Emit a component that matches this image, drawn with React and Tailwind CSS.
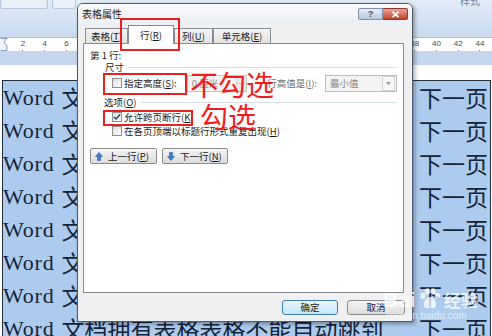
import React from "react";

const rows = Array.from({ length: 8 });
const rulerNums = Array.from({ length: 22 }, (_, i) => (i + 1) * 2);

// small checkbox like the classic Windows one
const Box = ({ checked }) => (
  <span className="w-[10px] h-[10px] shrink-0 border border-[#8e8f8f] bg-gradient-to-br from-[#dedede] to-white flex items-center justify-center">
    {checked && (
      <svg width="8" height="8" viewBox="0 0 8 8">
        <path d="M1 4 L3 6 L7 1.5" fill="none" stroke="#2b3f5c" strokeWidth="1.4" />
      </svg>
    )}
  </span>
);

const Arrow = ({ up }) => (
  <svg width="8" height="9" viewBox="0 0 8 9" className="shrink-0">
    <path
      d={up ? "M4 0.5 L7.5 4.5 L5.5 4.5 L5.5 8.5 L2.5 8.5 L2.5 4.5 L0.5 4.5 Z" : "M4 8.5 L7.5 4.5 L5.5 4.5 L5.5 0.5 L2.5 0.5 L2.5 4.5 L0.5 4.5 Z"}
      fill="#3f7fd0"
      stroke="#2a5a9e"
      strokeWidth="0.6"
    />
  </svg>
);

const Tab = ({ children, w, active }) => (
  <div
    className={
      active
        ? `${w} h-[19px] -mb-px z-10 bg-white border border-b-0 border-[#898c95] flex items-center justify-center`
        : `${w} h-[15px] bg-gradient-to-b from-[#f4f4f4] to-[#e2e2e2] border border-b-0 border-[#898c95] flex items-center justify-center`
    }
  >
    {children}
  </div>
);

export default function App() {
  return (
    <div className="relative w-[492px] h-[336px] overflow-hidden bg-white font-['Noto_Sans_CJK_SC',sans-serif]">
      {/* ribbon */}
      <div className="h-[38px] bg-gradient-to-b from-[#e2ecf8] to-[#c9daef] border-b border-[#a7bdd8] flex items-start">
        <div className="w-[48px] h-[9px] bg-[#e9f0f8] border border-t-0 border-[#b4c7de] rounded-b-[3px]" />
        <div className="w-[24px] h-[9px] ml-[4px] bg-[#e9f0f8] border border-t-0 border-[#b4c7de] rounded-b-[3px]" />
        <div className="ml-auto mr-[12px] -mt-[7px] text-[10px] text-[#6a84a6]">样式</div>
      </div>

      {/* ruler */}
      <div className="h-[13px] bg-white flex relative">
        <svg width="8" height="13" viewBox="0 0 8 13" className="absolute left-0 top-0">
          <path d="M0.5 0.5 H7 L4 4 L7 8 V12.5 H0.5" fill="#eef3f9" stroke="#8a9bb2" />
        </svg>
        <div className="flex pl-[12px]">
          {rulerNums.map((n) => (
            <div key={n} className="w-[21.78px] flex flex-col items-center">
              <span className="text-[8px] leading-[12px] text-[#4d4d4d] font-['Liberation_Sans']">{n}</span>
              <span className="w-px h-[2px] bg-[#777]" />
            </div>
          ))}
        </div>
      </div>
      <div className="h-[14px] bg-[#c3d6ee]" />
      <div className="h-[15px] bg-white" />

      {/* table in the document */}
      <div className="ml-[2px] w-[489px] border-l border-t border-r border-[#26303c] bg-[#adcbee] text-[#14233a]">
        {rows.map((_, i) => (
          <div key={i} className="h-[33px] flex items-center justify-between pr-[2px] leading-none">
            <span className="flex items-center">
              <span className="font-['Liberation_Serif'] text-[22px] tracking-[0.8px]">Word</span>
              <span className="text-[23px] ml-[7px]">文档拥有表格表格不能自动跳到</span>
            </span>
            <span className="text-[23px]">下一页</span>
          </div>
        ))}
      </div>

      {/* dialog window */}
      <div className="absolute left-[77px] top-[3px] w-[336px] h-[319px] border border-[#4d5b6b] rounded-t-[6px] bg-[#f0f0f0] flex flex-col shadow-[2px_2px_4px_rgba(0,0,0,0.35)] text-[9.5px] text-[#1a1a1a]">
        <div className="h-[21px] shrink-0 rounded-t-[5px] bg-gradient-to-b from-[#f8f9fb] to-[#eceff3] flex items-start">
          <span className="ml-[4px] mt-[3px] text-[10px] leading-[14px]">表格属性</span>
          <div className="ml-auto mr-[4px] mt-[4px] flex">
            <div className="w-[25px] h-[12px] border border-[#7d8fa8] rounded-l-[2px] bg-gradient-to-b from-[#e6edf6] to-[#b8c9de] flex items-center justify-center text-[9px] leading-none font-bold text-[#4a5563] font-['Liberation_Sans']">
              ?
            </div>
            <div className="w-[25px] h-[12px] border border-l-0 border-[#8a3a2e] rounded-r-[2px] bg-gradient-to-b from-[#e9a293] to-[#c5412c] flex items-center justify-center">
              <svg width="9" height="7" viewBox="0 0 9 7">
                <path d="M1.5 0.8 L7.5 6.2 M7.5 0.8 L1.5 6.2" stroke="white" strokeWidth="1.8" />
              </svg>
            </div>
          </div>
        </div>

        {/* tabs */}
        <div className="h-[18px] shrink-0 flex items-end pl-[7px]">
          <Tab w="w-[43px]">
            表格(<span className="underline">T</span>)
          </Tab>
          <Tab w="w-[46px]" active>
            行(<span className="underline">R</span>)
          </Tab>
          <Tab w="w-[39px]">
            列(<span className="underline">U</span>)
          </Tab>
          <Tab w="w-[58px]">
            单元格(<span className="underline">E</span>)
          </Tab>
        </div>

        {/* tab page */}
        <div className="h-[250px] shrink-0 ml-[5px] mr-[8px] bg-white border border-[#898c95] pl-[6px] pr-[6px] pt-[5px] flex flex-col">
          <div className="h-[12px] leading-[12px]">第 1 行:</div>
          <div className="h-[12px] flex items-center pl-[15px]">
            <span className="leading-[12px]">尺寸</span>
            <span className="flex-1 h-px bg-[#d5dfe5] ml-[4px]" />
          </div>
          <div className="h-[20px] flex items-center">
            <span className="ml-[22px]">
              <Box />
            </span>
            <span className="ml-[2px]">
              指定高度(<span className="underline">S</span>):
            </span>
            <div className="ml-[10px] w-[60px] h-[17px] border border-[#c2c2c2] bg-[#f4f4f4] flex items-center text-[#8d8d8d]">
              <span className="ml-[4px] flex-1">0 厘米</span>
              <div className="w-[10px] h-full border-l border-[#d0d0d0] flex flex-col">
                <span className="flex-1 border-b border-[#d0d0d0] bg-[#ececec]" />
                <span className="flex-1 bg-[#ececec]" />
              </div>
            </div>
            <span className="ml-auto mr-[8px] text-[#6f6f6f]">
              行高值是(<span className="underline">I</span>):
            </span>
            <div className="w-[72px] h-[17px] border border-[#bcbcbc] bg-[#f4f4f4] flex items-center text-[#858585]">
              <span className="ml-[4px] flex-1">最小值</span>
              <div className="w-[13px] h-[15px] mr-px border border-[#d4d4d4] bg-[#f7f7f7] flex items-center justify-center">
                <svg width="5" height="3" viewBox="0 0 5 3">
                  <path d="M0 0 H5 L2.5 3 Z" fill="#9a9a9a" />
                </svg>
              </div>
            </div>
          </div>
          <div className="mt-[3px] h-[12px] flex items-center pl-[14px]">
            <span className="leading-[12px]">
              选项(<span className="underline">O</span>)
            </span>
            <span className="flex-1 h-px bg-[#d5dfe5] ml-[4px]" />
          </div>
          <div className="mt-[2px] h-[14px] flex items-center">
            <span className="ml-[22px]">
              <Box checked />
            </span>
            <span className="ml-[2px]">
              允许跨页断行(<span className="underline">K</span>)
            </span>
          </div>
          <div className="h-[14px] flex items-center">
            <span className="ml-[22px]">
              <Box />
            </span>
            <span className="ml-[2px]">
              在各页顶端以标题行形式重复出现(<span className="underline">H</span>)
            </span>
          </div>
          <div className="mt-[10px] flex gap-[5px]">
            <div className="w-[67px] h-[16px] border border-[#8a8a8a] rounded-[2px] bg-gradient-to-b from-[#f6f6f6] to-[#dcdcdc] flex items-center pl-[4px] gap-[5px]">
              <Arrow up />
              <span>
                上一行(<span className="underline">P</span>)
              </span>
            </div>
            <div className="w-[66px] h-[16px] border border-[#8a8a8a] rounded-[2px] bg-gradient-to-b from-[#f6f6f6] to-[#dcdcdc] flex items-center pl-[4px] gap-[5px]">
              <Arrow />
              <span>
                下一行(<span className="underline">N</span>)
              </span>
            </div>
          </div>
        </div>

        {/* OK / cancel */}
        <div className="flex justify-end gap-[9px] pr-[7px] pt-[7px]">
          <div className="w-[56px] h-[15px] border border-[#3c7fb1] rounded-[3px] bg-gradient-to-b from-[#eaf6fd] to-[#c4e5f6] flex items-center justify-center">
            确定
          </div>
          <div className="w-[58px] h-[15px] border border-[#8a8a8a] rounded-[3px] bg-gradient-to-b from-[#f4f4f4] to-[#dcdcdc] flex items-center justify-center">
            取消
          </div>
        </div>
      </div>

      {/* red annotations */}
      <div className="absolute left-[120px] top-[18px] w-[60px] h-[33px] border-2 border-[#e8211f]" />
      <div className="absolute left-[103px] top-[73px] w-[84px] h-[22px] border-2 border-[#e8211f]" />
      <div className="absolute left-[103px] top-[110px] w-[90px] h-[16px] border-2 border-[#e8211f]" />
      <div className="absolute left-[190px] top-[70px] text-[28px] leading-[28px] text-[#ee1d23]">不勾选</div>
      <div className="absolute left-[200px] top-[102px] text-[28px] leading-[28px] text-[#ee1d23]">勾选</div>

      {/* watermark */}
      <div className="absolute left-[383px] top-[288px] flex items-center text-white/75">
        <span className="text-[21px] leading-none font-bold font-['Liberation_Sans']">Bai</span>
        <svg width="24" height="22" viewBox="0 0 24 22" className="mx-[2px]">
          <g fill="rgba(255,255,255,0.75)">
            <ellipse cx="5" cy="8" rx="2.6" ry="3.2" />
            <ellipse cx="9.5" cy="3.5" rx="2.6" ry="3.2" />
            <ellipse cx="15" cy="3.5" rx="2.6" ry="3.2" />
            <ellipse cx="19.5" cy="8" rx="2.6" ry="3.2" />
            <path d="M12 9 C8 9 5 15 6 18 C7 21 10 20 12 20 C14 20 17 21 18 18 C19 15 16 9 12 9 Z" />
          </g>
        </svg>
        <span className="text-[17px] leading-none font-bold">经验</span>
      </div>
      <div className="absolute left-[386px] top-[311px] text-[10px] leading-none text-white/70 font-['Liberation_Sans']">
        jingyan.baidu.com
      </div>
    </div>
  );
}
